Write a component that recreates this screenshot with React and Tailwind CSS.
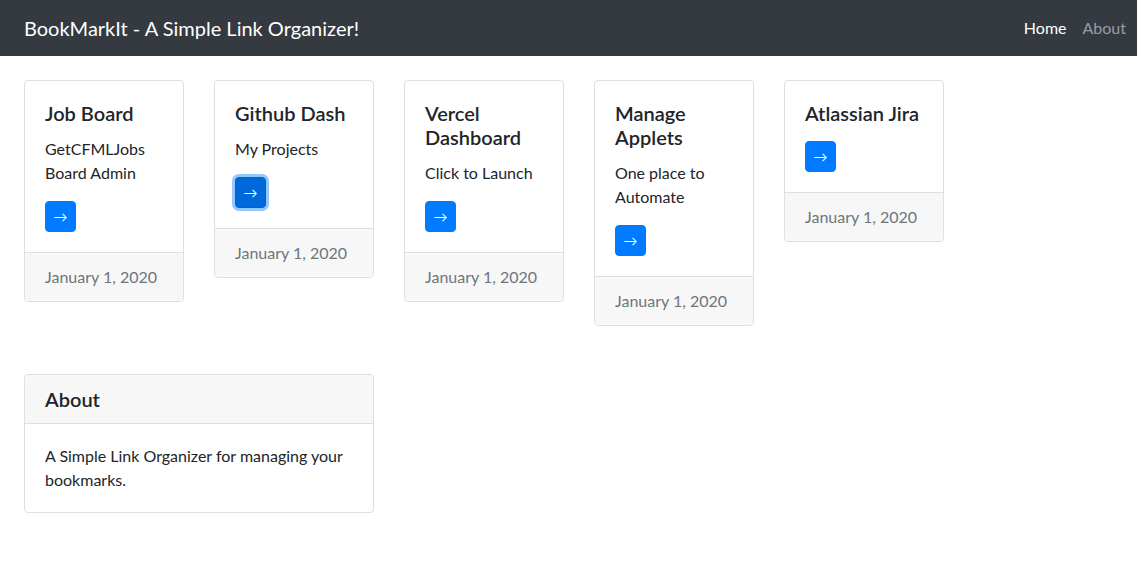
const font = { fontFamily: 'Lato, "Noto Sans", sans-serif' };

const links = [
  { title: ["Job Board"], text: ["GetCFMLJobs", "Board Admin"] },
  { title: ["Github Dash"], text: ["My Projects"], focused: true },
  { title: ["Vercel", "Dashboard"], text: ["Click to Launch"] },
  { title: ["Manage", "Applets"], text: ["One place to", "Automate"] },
  { title: ["Atlassian Jira"], text: [] },
];

function LinkCard({ title, text, focused }) {
  return (
    <div className="w-[160px] flex flex-col rounded border border-[#dfdfdf] bg-white">
      <div className="p-5">
        <h5 className="mb-3 text-[20px] leading-[24px] font-semibold text-[#212529]">
          {title.map((t) => (
            <span key={t} className="block whitespace-nowrap">{t}</span>
          ))}
        </h5>
        <p className={text.length > 0 ? "mb-4 text-[16px] leading-[24px] text-[#212529]" : "mb-4"}>
          {text.map((t) => (
            <span key={t} className="block whitespace-nowrap">{t}</span>
          ))}
        </p>
        <button
          className={
            focused
              ? "block w-[31px] h-[31px] rounded border border-[#0062cc] bg-[#0069d9] text-white text-[14px] leading-none shadow-[0_0_0_3px_rgba(38,143,255,0.5)]"
              : "block w-[31px] h-[31px] rounded border border-[#007bff] bg-[#007bff] text-white text-[14px] leading-none"
          }
        >
          →
        </button>
      </div>
      <div className="border-t border-[#dfdfdf] bg-[#f7f7f7] px-5 py-3 text-[16px] leading-[24px] text-[#6c757d] rounded-b">
        January 1, 2020
      </div>
    </div>
  );
}

export default function App() {
  return (
    <div className="min-h-screen bg-white text-[#212529]" style={font}>
      <nav className="h-14 bg-[#343a40] flex items-center justify-between pl-6 pr-[11px]">
        <a className="text-white text-[20px] leading-[30px]">BookMarkIt - A Simple Link Organizer!</a>
        <div className="flex items-center gap-4 text-[16px]">
          <a className="text-white">Home</a>
          <a className="text-[#9a9da0]">About</a>
        </div>
      </nav>

      <div className="px-6 pt-6">
        <div className="flex items-start gap-[30px]">
          {links.map((l) => (
            <LinkCard key={l.title.join(" ")} {...l} />
          ))}
        </div>

        <div className="mt-[48px] w-[350px] rounded border border-[#dfdfdf]">
          <div className="bg-[#f7f7f7] border-b border-[#dfdfdf] px-5 py-3 rounded-t">
            <h5 className="text-[20px] leading-[24px] font-semibold">About</h5>
          </div>
          <div className="p-5 text-[16px] leading-[24px]">
            A Simple Link Organizer for managing your bookmarks.
          </div>
        </div>
      </div>
    </div>
  );
}
